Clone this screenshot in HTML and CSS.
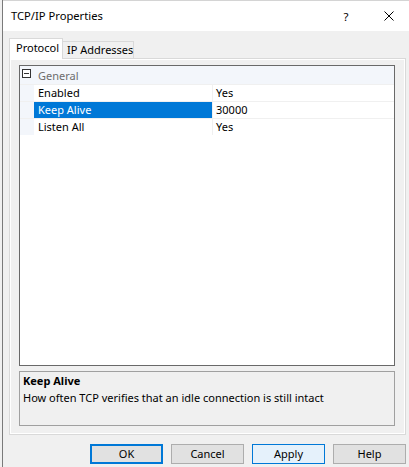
FILE: index.html
```html
<!DOCTYPE html>
<html>
<head>
<meta charset="utf-8">
<link rel="stylesheet" href="styles.css">
</head>
<body>
<div class="window">
  <div class="titlebar">
    <span class="title">TCP/IP Properties</span>
    <span class="cap-help">?</span>
    <span class="cap-close"><svg width="10" height="10" viewBox="0 0 10 10"><path d="M0.5 0.5 L9.5 9.5 M9.5 0.5 L0.5 9.5" stroke="#000" stroke-width="1" fill="none"/></svg></span>
  </div>
  <div class="client">
    <div class="tabs">
      <div class="tab active">Protocol</div>
      <div class="tab">IP Addresses</div>
    </div>
    <div class="page">
      <div class="grid">
        <div class="row cat">
          <span class="margin"><span class="minus"></span></span>
          <span class="catname">General</span>
        </div>
        <div class="row prop">
          <span class="margin"></span>
          <span class="name">Enabled</span>
          <span class="value">Yes</span>
        </div>
        <div class="row prop">
          <span class="margin"></span>
          <span class="name selected">Keep Alive</span>
          <span class="value">30000</span>
        </div>
        <div class="row prop">
          <span class="margin"></span>
          <span class="name">Listen All</span>
          <span class="value">Yes</span>
        </div>
      </div>
      <div class="desc">
        <div class="desc-title">Keep Alive</div>
        <div class="desc-text">How often TCP verifies that an idle connection is still intact</div>
      </div>
    </div>
    <div class="buttons">
      <div class="btn default">OK</div>
      <div class="btn">Cancel</div>
      <div class="btn hover">Apply</div>
      <div class="btn">Help</div>
    </div>
  </div>
</div>
</body>
</html>
```
FILE: styles.css
```css
* { box-sizing: border-box; }
html, body {
  margin: 0;
  padding: 0;
  width: 409px;
  height: 467px;
  overflow: hidden;
  background: #f0f0f0;
  font-family: "Noto Sans", "Open Sans", sans-serif;
  font-size: 11px;
  color: #000;
}
.window {
  margin-left: 2px;
  height: 467px;
  border-left: 1px solid #7a7a7a;
  display: flex;
  flex-direction: column;
}
.titlebar {
  height: 31px;
  flex: none;
  background: #fff;
  border-top: 1px solid #d4d4d4;
  display: flex;
  align-items: center;
  padding-left: 8px;
}
.title {
  flex: 1;
  font-size: 11.2px;
  line-height: 16px;
}
.cap-help {
  width: 12px;
  text-align: center;
  font-size: 11.5px;
  margin-right: 32px;
}
.cap-close {
  width: 10px;
  height: 10px;
  display: flex;
  margin-right: 15px;
}
.client {
  flex: 1;
  background: #f0f0f0;
  padding: 7px 3px 0 6px;
  display: flex;
  flex-direction: column;
}
.tabs {
  height: 20px;
  display: flex;
  align-items: flex-end;
}
.tab {
  height: 17px;
  padding: 0 0 0 4px;
  border: 1px solid #d9d9d9;
  border-bottom: none;
  border-left: none;
  background: #f0f0f0;
  line-height: 15px;
  width: 71px;
  white-space: nowrap;
}
.tab.active {
  position: relative;
  z-index: 1;
  height: 21px;
  width: 54px;
  margin-bottom: -1px;
  padding-left: 6px;
  border-left: 1px solid #d9d9d9;
  background: #fff;
  line-height: 18px;
}
.page {
  height: 377px;
  border: 1px solid #d9d9d9;
  box-shadow: inset 0 0 0 1px #fff;
  padding: 6px 10px 8px 9px;
  display: flex;
  flex-direction: column;
}
.grid {
  height: 301px;
  border: 1px solid #696969;
  background: #fff;
}
.row {
  display: flex;
}
.row.cat {
  height: 18px;
  background: #f3f6fb;
  align-items: center;
}
.row.prop {
  height: 17px;
  border-top: 1px solid #f0f0f0;
}
.margin {
  width: 14px;
  flex: none;
  background: #f3f6fb;
  display: flex;
  align-items: center;
  padding-left: 2px;
}
.minus {
  width: 9px;
  height: 9px;
  border: 1px solid #333;
  background: #fff;
  position: relative;
  margin-top: -3px;
}
.minus::after {
  content: "";
  position: absolute;
  left: 1px;
  right: 1px;
  top: 3px;
  height: 1px;
  background: #333;
}
.catname {
  padding-left: 4px;
  color: #6d6d6d;
  line-height: 18px;
  padding-top: 1px;
}
.name {
  width: 179px;
  flex: none;
  padding-left: 4px;
  line-height: 16px;
  border-right: 1px solid #f0f0f0;
}
.name.selected {
  background: #0078d7;
  color: #fff;
}
.value {
  flex: 1;
  padding-left: 3px;
  line-height: 16px;
}
.desc {
  margin-top: 5px;
  height: 55px;
  border: 1px solid #a0a0a0;
  background: #f0f0f0;
  padding: 1px 3px;
}
.desc-title {
  font-weight: bold;
  line-height: 16px;
}
.desc-text {
  line-height: 18px;
}
.buttons {
  display: flex;
  justify-content: flex-end;
  gap: 8px;
  margin-top: 9px;
}
.btn {
  width: 73px;
  height: 20px;
  background: #e1e1e1;
  border: 1px solid #adadad;
  text-align: center;
  line-height: 18px;
}
.btn.default {
  border: 2px solid #0078d7;
  line-height: 16px;
}
.btn.hover {
  background: #e5f1fb;
  border-color: #0078d7;
}
```
